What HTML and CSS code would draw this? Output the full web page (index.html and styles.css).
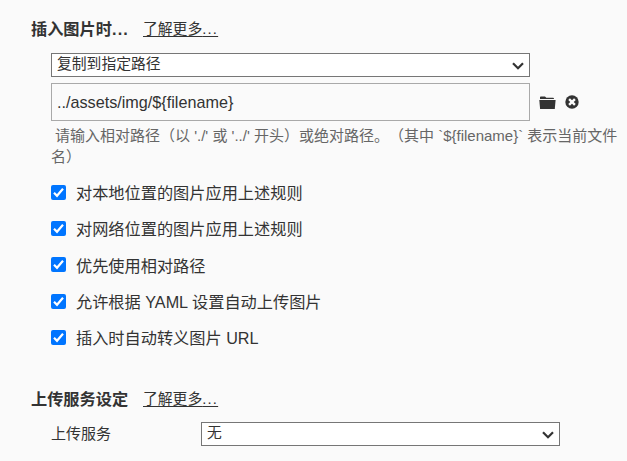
FILE: index.html
```html
<!DOCTYPE html>
<html lang="zh-CN">
<head>
<meta charset="utf-8">
<title>图像设置</title>
<link rel="stylesheet" href="styles.css">
</head>
<body>
<main class="panel">
  <section class="group">
    <header class="heading"><h2>插入图片时<span class="dots">...</span></h2><a class="more">了解更多<span class="dots">...</span></a></header>
    <div class="content">
      <div class="select"><span>复制到指定路径</span><svg class="chevron" viewBox="0 0 12 8"><path d="M1 1.2 6 6.2 11 1.2"/></svg></div>
      <div class="path-row">
        <div class="field">../assets/img/${filename}</div>
        <svg class="folder" viewBox="0 0 17 14"><path d="M1 3V1.2Q1 .5 1.8.5H6L7.3 1.7H14Q15 1.7 15 3Z"/><path d="M.3 4H16.6L15.8 13H1.1Z"/></svg>
        <svg class="clear" viewBox="0 0 14 14"><circle cx="7" cy="7" r="6.7"/><path d="M4.1 4.1 9.9 9.9M9.9 4.1 4.1 9.9"/></svg>
      </div>
      <p class="hint"><span class="lead">请输入相对路径（以 './' 或 '../' 开头）或绝对路径。（其中 `${filename}` 表示当前文件</span><br>名）</p>
      <ul class="options">
        <li><svg class="check" viewBox="0 0 15 15"><rect width="15" height="15" rx="2"/><path d="M3 7.8 6 10.8 12 3.8"/></svg><span>对本地位置的图片应用上述规则</span></li>
        <li><svg class="check" viewBox="0 0 15 15"><rect width="15" height="15" rx="2"/><path d="M3 7.8 6 10.8 12 3.8"/></svg><span>对网络位置的图片应用上述规则</span></li>
        <li><svg class="check" viewBox="0 0 15 15"><rect width="15" height="15" rx="2"/><path d="M3 7.8 6 10.8 12 3.8"/></svg><span>优先使用相对路径</span></li>
        <li><svg class="check" viewBox="0 0 15 15"><rect width="15" height="15" rx="2"/><path d="M3 7.8 6 10.8 12 3.8"/></svg><span>允许根据 YAML 设置自动上传图片</span></li>
        <li><svg class="check" viewBox="0 0 15 15"><rect width="15" height="15" rx="2"/><path d="M3 7.8 6 10.8 12 3.8"/></svg><span>插入时自动转义图片 URL</span></li>
      </ul>
    </div>
  </section>
  <section class="group">
    <header class="heading"><h2>上传服务设定</h2><a class="more">了解更多<span class="dots">...</span></a></header>
    <div class="content service">
      <span class="service-label">上传服务</span>
      <div class="select wide"><span>无</span><svg class="chevron" viewBox="0 0 12 8"><path d="M1 1.2 6 6.2 11 1.2"/></svg></div>
    </div>
  </section>
</main>
</body>
</html>
```
FILE: styles.css
```css
* { box-sizing: border-box; }
body {
  margin: 0;
  height: 461px;
  overflow: hidden;
  background: #fafafa;
  color: #333;
  font-family: "Liberation Sans", "Noto Sans CJK SC", sans-serif;
  font-size: 14.8px;
}
svg { display: block; flex: none; }
.panel { padding: 17px 0 0 31px; }
.heading { display: flex; align-items: center; height: 24px; }
.heading h2 { margin: 0; width: 112px; font-size: 16.2px; line-height: 24px; white-space: nowrap; }
.more { line-height: 24px; text-decoration: underline; text-underline-offset: 2px; text-decoration-thickness: 1px; white-space: nowrap; }
.dots { letter-spacing: 1.2px; }
.content { padding-left: 20px; }
.select {
  display: flex;
  align-items: center;
  justify-content: space-between;
  width: 479px;
  height: 24px;
  margin-top: 12px;
  padding: 0 5px 2px 5px;
  border: 1px solid #767676;
  background: #fff;
  line-height: 20px;
}
.chevron { width: 12px; height: 8px; margin-top: 3px; fill: none; stroke: #333; stroke-width: 2.2; }
.path-row { display: flex; align-items: center; margin-top: 6px; }
.field { width: 479px; height: 38px; padding-left: 5px; border: 1px solid #a9a9a9; font-size: 16.2px; line-height: 36px; }
.folder { width: 17px; height: 14px; margin: 1px 0 0 9px; fill: #333; }
.clear { width: 14px; height: 14px; margin-left: 9px; fill: #333; stroke: #fafafa; stroke-width: 2.4; }
.clear circle { stroke: none; }
.hint { margin: 4px 0 0; color: #666; font-size: 15px; line-height: 21px; white-space: nowrap; text-spacing-trim: space-all; }
.lead { margin-left: 4px; }
.options { margin: 7px 0 0; padding: 0; list-style: none; font-size: 16.2px; }
.options li { display: flex; align-items: center; gap: 10px; height: 36.3px; white-space: nowrap; }
.check { width: 15px; height: 15px; margin-top: 0; fill: #0075ff; }
.check path { fill: none; stroke: #fff; stroke-width: 2.2; }
.group + .group { margin-top: 32px; }
.service { display: flex; align-items: center; margin-top: 11px; }
.service-label { width: 150px; padding-bottom: 3px; font-size: 15px; }
.select.wide { width: 359px; margin-top: 0; }
```
